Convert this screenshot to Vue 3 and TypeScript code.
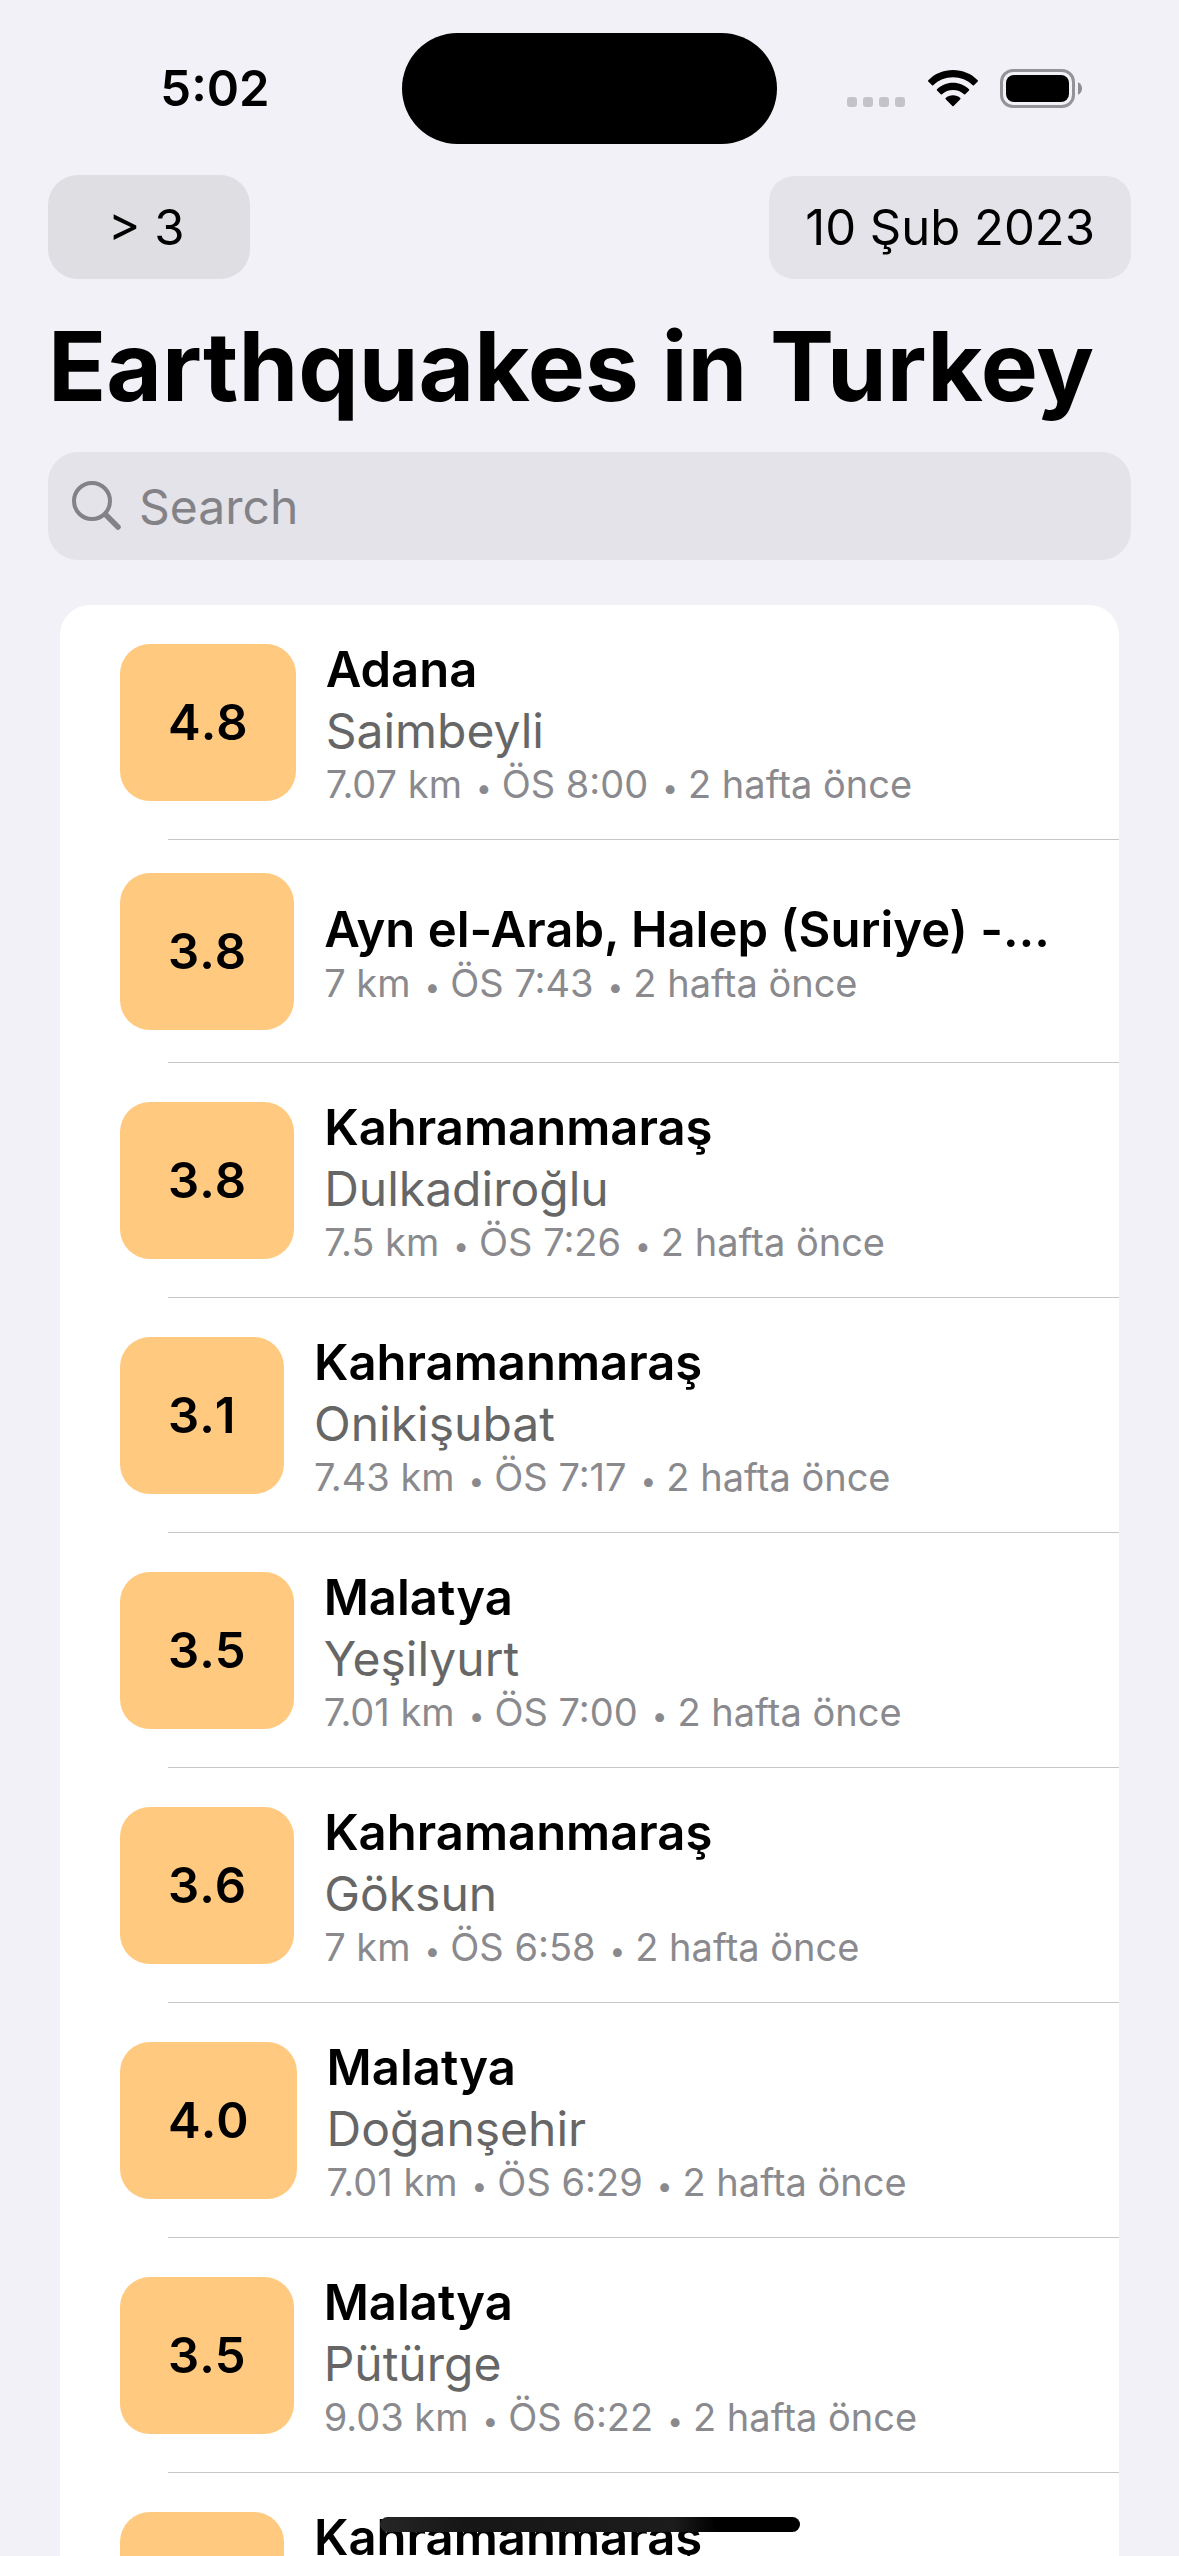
<script setup lang="ts">
import { ref } from 'vue'

interface Quake {
  id: number
  magnitude: string
  city: string
  district?: string
  details: string[]
}

const query = ref('')

const quakes: Quake[] = [
  { id: 1, magnitude: '4.8', city: 'Adana', district: 'Saimbeyli', details: ['7.07 km', 'ÖS 8:00', '2 hafta önce'] },
  { id: 2, magnitude: '3.8', city: 'Ayn el-Arab, Halep (Suriye) -…', details: ['7 km', 'ÖS 7:43', '2 hafta önce'] },
  { id: 3, magnitude: '3.8', city: 'Kahramanmaraş', district: 'Dulkadiroğlu', details: ['7.5 km', 'ÖS 7:26', '2 hafta önce'] },
  { id: 4, magnitude: '3.1', city: 'Kahramanmaraş', district: 'Onikişubat', details: ['7.43 km', 'ÖS 7:17', '2 hafta önce'] },
  { id: 5, magnitude: '3.5', city: 'Malatya', district: 'Yeşilyurt', details: ['7.01 km', 'ÖS 7:00', '2 hafta önce'] },
  { id: 6, magnitude: '3.6', city: 'Kahramanmaraş', district: 'Göksun', details: ['7 km', 'ÖS 6:58', '2 hafta önce'] },
  { id: 7, magnitude: '4.0', city: 'Malatya', district: 'Doğanşehir', details: ['7.01 km', 'ÖS 6:29', '2 hafta önce'] },
  { id: 8, magnitude: '3.5', city: 'Malatya', district: 'Pütürge', details: ['9.03 km', 'ÖS 6:22', '2 hafta önce'] },
  { id: 9, magnitude: '', city: 'Kahramanmaraş', details: [] },
]
</script>

<template>
  <div class="screen">
    <div class="status">
      <span class="clock">5:02</span>
      <span class="island"></span>
      <div class="indicators">
        <svg width="59" height="39" viewBox="0 0 59 39" aria-hidden="true">
          <g fill="#c4c3c8">
            <rect x="0" y="28" width="10" height="10" rx="3" />
            <rect x="16" y="28" width="10" height="10" rx="3" />
            <rect x="32" y="28" width="10" height="10" rx="3" />
            <rect x="48" y="28" width="10" height="10" rx="3" />
          </g>
        </svg>
        <svg width="50" height="39" viewBox="0 0 50 39" aria-hidden="true">
          <path d="M25 1C34.500 1 43.300 4.700 49.700 11.200Q50.300 11.900 49.700 12.500L46 16.200Q45.400 16.700 44.800 16.200C39.500 11.200 32.500 8.300 25 8.300S10.500 11.200 5.200 16.200Q4.600 16.700 4 16.200L.3 12.500Q-.3 11.900 .3 11.200C6.700 4.700 15.500 1 25 1Z" />
          <path d="M25 13.700C31.200 13.700 36.800 16.200 41 20.200Q41.600 20.800 41 21.400L37.200 25.200Q36.600 25.700 36 25.200C33.100 22.500 29.200 21 25 21S16.900 22.500 14 25.200Q13.400 25.700 12.800 25.200L9 21.400Q8.400 20.800 9 20.200C13.200 16.200 18.800 13.700 25 13.700Z" />
          <path d="M25 26.300C27.800 26.300 30.400 27.300 32.300 29Q32.900 29.600 32.300 30.200L25.600 37Q25 37.600 24.400 37L17.700 30.200Q17.100 29.600 17.700 29C19.600 27.300 22.200 26.300 25 26.300Z" />
        </svg>
        <svg width="82" height="39" viewBox="0 0 82 39" aria-hidden="true">
          <rect x="1.500" y="1.500" width="72" height="36" rx="11.500" fill="none" stroke="#949397" stroke-width="3" />
          <rect x="6" y="6" width="63" height="27" rx="8" />
          <path d="M78 13.300C80.500 14.300 82 16.700 82 19.500S80.500 24.700 78 25.700Z" fill="#8e8d91" />
        </svg>
      </div>
    </div>

    <div class="toolbar">
      <button class="filter" type="button">&gt; 3</button>
      <button class="date" type="button">10 Şub 2023</button>
    </div>

    <h1>Earthquakes in Turkey</h1>

    <label class="search">
      <svg width="50" height="50" viewBox="0 0 50 50" fill="none" stroke="#838287" aria-hidden="true">
        <circle cx="20" cy="20" r="18" stroke-width="4" />
        <path d="M33.500 33.500L46 46" stroke-width="5.500" stroke-linecap="round" />
      </svg>
      <input v-model="query" type="search" placeholder="Search" aria-label="Search" />
    </label>

    <ul class="list">
      <li v-for="q in quakes" :key="q.id" class="row">
        <span class="badge">{{ q.magnitude }}</span>
        <div class="info">
          <h2>{{ q.city }}</h2>
          <p v-if="q.district" class="district">{{ q.district }}</p>
          <p v-if="q.details.length" class="meta">
            <template v-for="(detail, i) in q.details" :key="i"><span v-if="i > 0" class="dot">•</span>{{ detail }}</template>
          </p>
        </div>
      </li>
    </ul>

    <div class="home"></div>
  </div>
</template>

<style>
body {
  margin: 0;
  background: #f2f1f7;
}
</style>

<style scoped>
.screen {
  position: relative;
  box-sizing: border-box;
  height: 100vh;
  overflow: hidden;
  padding: 33px 48px 0;
  background: #f2f1f7;
  color: #000;
  font-family: Inter, 'Liberation Sans', sans-serif;
  font-size: 49px;
  line-height: 61px;
}

.status {
  display: grid;
  grid-template-columns: 1fr 375px 1fr;
  align-items: center;
  margin: 0 -48px;
}

.clock {
  padding-left: 28px;
  text-align: center;
  font-weight: 600;
}

.island {
  height: 111px;
  border-radius: 56px;
  background: #000;
}

.indicators {
  display: flex;
  justify-content: center;
  gap: 22px;
  padding-right: 28px;
}

.toolbar {
  display: flex;
  align-items: flex-end;
  justify-content: space-between;
  margin-top: 31px;
}

button {
  border: 0;
  color: inherit;
  font: inherit;
}

.filter {
  height: 104px;
  padding: 0 66px 0 60px;
  border-radius: 30px;
  background: #dfdee3;
}

.date {
  height: 103px;
  padding: 0 36px;
  border-radius: 25px;
  background: #e4e3e9;
}

h1 {
  margin: 27px 0 26px;
  font-size: 96px;
  line-height: 120px;
  font-weight: 700;
  white-space: nowrap;
}

.search {
  display: flex;
  align-items: center;
  gap: 17px;
  height: 108px;
  padding: 0 24px;
  border-radius: 30px;
  background: #e4e3e9;
}

.search input {
  flex: 1;
  min-width: 0;
  height: 61px;
  padding: 0;
  border: 0;
  outline: 0;
  background: none;
  color: inherit;
  font: inherit;
  font-size: 48px;
  appearance: none;
}

.search input::placeholder {
  color: #838287;
  opacity: 1;
}

.list {
  margin: 45px 12px 0;
  padding: 0;
  border-radius: 30px;
  background: #fff;
  list-style: none;
}

.row {
  position: relative;
  display: flex;
  align-items: center;
  gap: 30px;
  padding: 33px 60px;
}

.row::after {
  content: '';
  position: absolute;
  right: 0;
  bottom: 0;
  left: 108px;
  height: 1px;
  background: #c6c6c8;
}

.badge {
  min-width: 68px;
  min-height: 61px;
  padding: 48px;
  border-radius: 30px;
  background: #ffc980;
  font-weight: 600;
  font-kerning: none;
}

.info {
  margin: 1px 0 -1px;
  min-width: 0;
  white-space: nowrap;
}

.row:last-child {
  align-items: flex-start;
  padding-top: 39px;
}

.row:last-child .info {
  margin-top: -5px;
}

.row:last-child::after {
  display: none;
}

h2,
p {
  margin: 0;
  line-height: 61px;
}

h2 {
  font-size: 49px;
  font-weight: 600;
}

.district {
  color: #666;
  font-size: 48px;
}

.meta {
  color: #8a8a8e;
  font-size: 38px;
  line-height: 47px;
}

.dot {
  margin: 0 10px 0 14px;
  font-size: 28px;
  line-height: 28px;
}

.home {
  position: absolute;
  bottom: 24px;
  left: 50%;
  width: 420px;
  height: 15px;
  margin-left: -210px;
  border-radius: 8px;
  background: linear-gradient(90deg, #262626, #161616 20%, #1c1c1c 70%, #000 80%);
}
</style>
